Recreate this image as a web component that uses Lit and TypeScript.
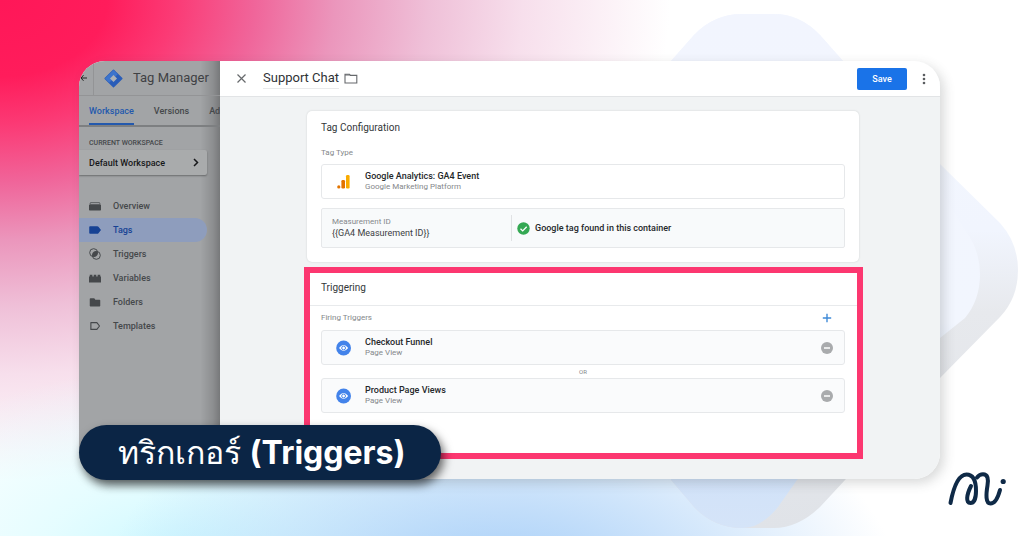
import { LitElement, html, css, svg } from "lit";
import { customElement } from "lit/decorators.js";

const NAV = [
  { label: "Overview", icon: svg`<path d="M2 3.500h12L15 6H1z" fill="none" stroke="currentColor"/><path d="M0 6.500h16V13q0 1-1 1H1q-1 0-1-1z" fill="currentColor"/>` },
  { label: "Tags", active: true, icon: svg`<path d="M1.500 3H11q1 0 1.600.8L16 8l-3.400 4.200q-.6.800-1.600.8H1.500q-1.200 0-1.200-1V4q0-1 1.200-1z" fill="currentColor"/>` },
  { label: "Triggers", icon: svg`<circle cx="6.200" cy="6.200" r="5.300" fill="none" stroke="currentColor" stroke-width="1.300"/><circle cx="9.800" cy="9.800" r="5.300" fill="none" stroke="currentColor" stroke-width="1.300"/><path d="M11.300 4.600A5.300 5.300 0 0 0 4.700 11.300A5.300 5.300 0 0 0 11.300 4.600z" fill="currentColor"/>` },
  { label: "Variables", icon: svg`<path d="M0 6h1V3.500h3.500V6h1.800V3.500h3.400V6h1.800V3.500H15V6h1v8H0z" fill="currentColor"/>` },
  { label: "Folders", icon: svg`<path d="M2 3h5l1.500 2H14q1 0 1 1v7q0 1-1 1H2q-1 0-1-1V4q0-1 1-1z" fill="currentColor"/>` },
  { label: "Templates", icon: svg`<path d="M2.500 3.500h8L14 8l-3.500 4.500h-8z" fill="none" stroke="currentColor" stroke-width="1.500" stroke-linejoin="round"/>` },
];

const TRIGGERS = ["Checkout Funnel", "Product Page Views"];

@customElement("app-root")
export class AppRoot extends LitElement {
  static styles = css`
    :host {
      display: block;
      font-family: Roboto, "Noto Sans", sans-serif;
      color: #3c4043;
    }
    * { box-sizing: border-box; }
    button, a { font: inherit; color: inherit; text-decoration: none; }
    button { border: 0; padding: 0; margin: 0; background: none; }
    svg { display: block; }
    h1, h2, p, ul { margin: 0; padding: 0; font-weight: 400; }
    .scene {
      position: relative;
      min-height: 100vh;
      display: flex;
      padding: 61px 84px 57px 79px;
      overflow: hidden;
      background:
        radial-gradient(ellipse 400px 240px at 49% 112%, #9cc8f6 0%, #a9d0f8cc 30%, #c5def900 100%),
        radial-gradient(ellipse 330px 190px at 17% 104%, #cdf8ff 0%, #dcfcffbb 40%, #e8fdff00 100%),
        radial-gradient(ellipse 670px 480px at 0% 0%, #ff1758 0%, #ff1c5b 16%, #fb3a75 26%, #f0659a 38%, #eb96bc 50%, #efc0d8 64%, #f7dfec 78%, #ffffff00 100%),
        #fff;
    }
    .backdrop { position: absolute; inset: 0; width: 100%; height: 100%; }
    .window {
      position: relative;
      flex: 1;
      min-width: 0;
      display: flex;
      border-radius: 26px;
      overflow: hidden;
      background: #f1f3f4;
    }
    .frame {
      position: relative;
      flex: 1;
      min-width: 0;
      display: flex;
      border-radius: 26px;
      box-shadow: 4px 4px 12px rgba(60, 64, 67, 0.2);
    }
    .side {
      width: 141px;
      flex: none;
      overflow: hidden;
      background: linear-gradient(90deg, #0000 86%, #0002 95%, #0004 100%), #a2a4a6;
      color: #45484b;
    }
    .brand { display: flex; align-items: center; height: 35px; border-bottom: 1px solid #939496; }
    .back { width: 15px; height: 35px; display: grid; place-items: center start; border-right: 1px solid #939496; color: #222; }
    .logo { margin: 0 10px; flex: none; }
    .brand-name { font-size: 13px; line-height: 20px; white-space: nowrap; color: #3f4144; }
    .tabs { display: flex; gap: 20px; height: 31px; padding-left: 10px; border-bottom: 2px solid #7d7f81; font-size: 9px; font-weight: 500; white-space: nowrap; }
    .tab { display: flex; align-items: center; height: 29px; }
    .tab.on { color: #2459ad; border-bottom: 2px solid #2459ad; padding-top: 2px; }
    .overline { padding: 12px 10px 0; font-size: 7px; line-height: 9px; font-weight: 500; }
    .space {
      display: flex; align-items: center; justify-content: space-between;
      width: 128px; height: 25px; margin-top: 2px; padding: 0 8px 0 10px;
      background: #a9abac; border-radius: 0 2px 2px 0;
      box-shadow: 0 1px 2px rgba(0, 0, 0, 0.35);
      font-size: 9px; font-weight: 500; color: #17181a;
    }
    .nav { list-style: none; padding-top: 19px; font-size: 9px; font-weight: 500; }
    .nav-link { display: flex; align-items: center; gap: 12px; width: 128px; height: 24px; padding-left: 10px; border-radius: 0 12px 12px 0; }
    .nav-link.on { background: #8e9dbd; color: #174294; }
    .main { flex: 1; min-width: 0; display: flex; flex-direction: column; }
    .top { display: flex; align-items: center; height: 36px; padding: 0 10px 0 16px; background: #fff; border-bottom: 1px solid #e2e4e6; }
    .title { margin: 0 5px 0 16px; font-size: 13px; line-height: 20px; color: #2f3236; border-bottom: 1px solid #e9eaeb; }
    .save { width: 50px; height: 22px; margin: 0 11px 0 auto; border-radius: 2px; background: #1a73e8; color: #fff; font-size: 9px; font-weight: 500; }
    .panels { flex: 1; padding: 14px 77px 20px 84px; display: flex; flex-direction: column; gap: 5px; }
    .card { margin: 0 4px 0 3px; padding: 10px 14px 14px; background: #fff; border-radius: 5px; box-shadow: 0 0 2px rgba(60, 64, 67, 0.2); }
    .heading { font-size: 10px; line-height: 14px; color: #34373a; }
    .label { font-size: 8px; line-height: 10px; color: #85888b; }
    .card .label.first { margin: 13px 0 6px; }
    .row { display: flex; align-items: center; width: 100%; height: 35px; border: 1px solid #e6e8ea; border-radius: 3px; text-align: left; padding: 0 11px 0 14px; }
    .row.fill { background: #fafbfc; }
    .glyph { width: 16px; flex: none; margin-right: 13px; }
    .name { font-size: 9px; line-height: 11px; font-weight: 500; color: #25282b; }
    .sub { font-size: 8px; line-height: 10px; color: #85888b; }
    .measure { display: flex; align-items: center; height: 40px; margin-top: 9px; padding: 0 10px; border: 1px solid #e6e8ea; border-radius: 2px; background: #f8fafb; }
    .value { font-size: 9px; line-height: 12px; color: #3c4043; }
    .id { width: 180px; padding: 2px 0; border-right: 1px solid #e0e2e4; }
    .found { display: flex; align-items: center; gap: 5px; padding-left: 5px; font-size: 9px; font-weight: 500; color: #25282b; }
    .triggering { flex: 1; border: 6px solid #fc3770; background: #fff; }
    .triggering .heading { padding: 8px 11px 10px; border-bottom: 1px solid #e8eaec; }
    .firing { padding: 6px 12px 0 11px; }
    .bar { display: flex; align-items: center; justify-content: space-between; height: 12px; margin-bottom: 6px; padding-right: 13px; }
    .or { height: 13px; font-size: 6px; line-height: 14px; text-align: center; color: #85888b; }
    .remove { margin-left: auto; }
    .pill {
      position: absolute; left: 79px; top: 425px;
      width: 362px; height: 55px; border-radius: 28px; padding-left: 39px;
      display: flex; align-items: center;
      background: #0b2545; color: #fff;
      box-shadow: 3px 5px 10px rgba(0, 0, 0, 0.6);
      font-family: Inter, sans-serif;
      font-size: 32px; line-height: 40px; font-weight: 500; white-space: pre;
    }
    .pill b { font-weight: 700; }
    .mark { position: absolute; right: 16px; bottom: 28px; }
  `;

  render() {
    return html`
      <div class="scene">
        <svg class="backdrop" viewBox="0 0 1024 536" preserveAspectRatio="none" aria-hidden="true">
          <defs>
            <linearGradient id="outer" x1="0" y1="0" x2="0" y2="1">
              <stop offset="0" stop-color="#f4f7fe" /><stop offset="0.420" stop-color="#f1f5fe" />
              <stop offset="0.580" stop-color="#e7e9ed" /><stop offset="1" stop-color="#e0e3e8" />
            </linearGradient>
            <linearGradient id="inner" x1="0" y1="0" x2="0" y2="1">
              <stop offset="0" stop-color="#f2f5fe" /><stop offset="0.600" stop-color="#f2f6fe" />
              <stop offset="0.850" stop-color="#cfe1f9" /><stop offset="1" stop-color="#d5e4f8" />
            </linearGradient>
          </defs>
          <path d="M671 61L694 35Q714 14 742 14H774Q800 14 820 35L843 61L941 165L1000 223Q1018 243 1018 270Q1018 298 1000 317L940 378L845 480L820 507Q798 528 774 528H742Q714 528 694 507L671 480z" fill="url(#outer)" />
          <path d="M671 61L694 35Q714 14 742 14H774Q800 14 820 35L843 61L941 190L965 230Q980 250 980 274Q980 300 965 318L940 338L797 480L778 507Q768 520 754 526Q748 528 742 528Q714 528 694 507L671 480z" fill="url(#inner)" />
        </svg>
        <div class="frame">
          <div class="window">
            <aside class="side">
              <div class="brand">
                <button class="back" aria-label="Back">
                  <svg width="8" height="8" viewBox="0 0 8 8" fill="none" stroke="currentColor"><path d="M8 4H2M4.500 1.200L2 4l2.500 2.800" /></svg>
                </button>
                <svg class="logo" width="19" height="19" viewBox="0 0 20 20">
                  <path d="M10 1.200L18.800 10 10 18.800 1.200 10z" fill="#2a5db8" stroke="#2a5db8" stroke-width="1.500" stroke-linejoin="round" />
                  <path d="M10 1L1 10l4.500 4.500L14.500 5.500z" fill="#3d74cc" />
                  <path d="M10 6.300L13.700 10 10 13.700 6.300 10z" fill="#adb1b7" />
                </svg>
                <span class="brand-name">Tag Manager</span>
              </div>
              <nav class="tabs">
                <a class="tab on" href="#workspace">Workspace</a>
                <a class="tab" href="#versions">Versions</a>
                <a class="tab" href="#admin">Admin</a>
              </nav>
              <p class="overline">CURRENT WORKSPACE</p>
              <button class="space">
                Default Workspace
                <svg width="6" height="9" viewBox="0 0 6 9" fill="none" stroke="currentColor" stroke-width="1.500"><path d="M1 1l3.500 3.500L1 8" /></svg>
              </button>
              <ul class="nav">
                ${NAV.map((n) => html`<li><a class="nav-link ${n.active ? "on" : ""}" href="#${n.label}">
                  <svg width="12" height="12" viewBox="0 0 16 16">${n.icon}</svg>${n.label}</a></li>`)}
              </ul>
            </aside>
            <main class="main">
              <header class="top">
                <button aria-label="Close"><svg width="11" height="11" viewBox="0 0 11 11" stroke="#66696c" stroke-width="1.200"><path d="M1.500 1.500l8 8M9.500 1.500l-8 8" /></svg></button>
                <h1 class="title">Support Chat</h1>
                <svg width="14" height="11" viewBox="0 0 14 11" fill="none" stroke="#66696c" stroke-width="1.100"><path d="M1 1.200h4.500l1 1.200H12.800V10H1z" /><path d="M1 2h5" /></svg>
                <button class="save">Save</button>
                <button aria-label="More"><svg width="12" height="12" viewBox="0 0 12 12" fill="#5a5d60"><circle cx="6" cy="2" r="1.300" /><circle cx="6" cy="6" r="1.300" /><circle cx="6" cy="10" r="1.300" /></svg></button>
              </header>
              <div class="panels">
                <section class="card">
                  <h2 class="heading">Tag Configuration</h2>
                  <p class="label first">Tag Type</p>
                  <button class="row">
                    <svg class="glyph" width="16" height="16" viewBox="0 0 16 16"><rect x="10" y="1" width="3.600" height="13.500" rx="1.200" fill="#f9ab00" /><rect x="5.400" y="6" width="3.600" height="8.500" rx="1.200" fill="#e37400" /><circle cx="2.800" cy="12.900" r="1.600" fill="#e37400" /></svg>
                    <span><div class="name">Google Analytics: GA4 Event</div><div class="sub">Google Marketing Platform</div></span>
                  </button>
                  <div class="measure">
                    <div class="id"><div class="label">Measurement ID</div><div class="value">{{GA4 Measurement ID}}</div></div>
                    <div class="found">
                      <svg width="13" height="13" viewBox="0 0 13 13"><circle cx="6.500" cy="6.500" r="6.200" fill="#34a853" /><path d="M3.500 6.700l2.200 2.200 4-4.200" fill="none" stroke="#fff" stroke-width="1.300" /></svg>
                      Google tag found in this container
                    </div>
                  </div>
                </section>
                <section class="triggering">
                  <h2 class="heading">Triggering</h2>
                  <div class="firing">
                    <div class="bar">
                      <span class="label">Firing Triggers</span>
                      <button aria-label="Add trigger"><svg width="10" height="10" viewBox="0 0 10 10" stroke="#3f8ad8" stroke-width="1.400"><path d="M5 .8v8.400M.8 5h8.400" /></svg></button>
                    </div>
                    ${TRIGGERS.map((t, i) => html`
                      ${i ? html`<div class="or">OR</div>` : ""}
                      <div class="row fill">
                        <svg class="glyph" width="16" height="16" viewBox="0 0 16 16"><circle cx="7.600" cy="8" r="7.400" fill="#4383ea" /><path d="M3 8Q7.600 2.200 12.200 8 7.600 13.800 3 8z" fill="#fff" /><circle cx="7.600" cy="8" r="1.900" fill="#fff" stroke="#4383ea" /></svg>
                        <div><div class="name">${t}</div><div class="sub">Page View</div></div>
                        <button class="remove" aria-label="Remove ${t}"><svg width="12" height="12" viewBox="0 0 12 12"><circle cx="6" cy="6" r="6" fill="#a9abad" /><path d="M3 6h6" stroke="#fff" stroke-width="1.300" /></svg></button>
                      </div>`)}
                  </div>
                </section>
              </div>
            </main>
          </div>
        </div>
        <div class="pill"><span>ทริกเกอร์ <b>(Triggers)</b></span></div>
        <svg class="mark" width="60" height="38" viewBox="0 0 60 38" fill="none" stroke="#0f2a47" stroke-width="4" stroke-linecap="round" stroke-linejoin="round" aria-label="Mi">
          <path d="M2.500 33C5 20 10 4.500 18.500 4.500 26 4.500 28 13 28 21c0 7-2 12-5.500 12-5 0-4-8 .5-17" />
          <path d="M29 7.500C31 5 33 4.300 35 4.300c5 0 5.500 5 4.500 11-1.500 9-2 18.200 3 18.200 4 0 7.500-6 9.500-13.500" />
          <circle cx="55.200" cy="11.500" r="2.600" fill="#0f2a47" stroke="none" />
        </svg>
      </div>
    `;
  }
}
